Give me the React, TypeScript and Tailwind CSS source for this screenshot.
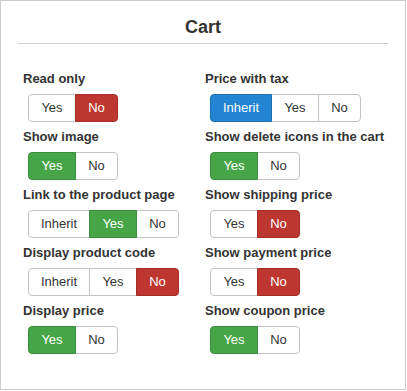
import React from 'react'

type Opt = 'Inherit' | 'Yes' | 'No'

type Setting = {
  label: string
  options: Opt[]
  active: Opt
}

const left: Setting[] = [
  { label: 'Read only', options: ['Yes', 'No'], active: 'No' },
  { label: 'Show image', options: ['Yes', 'No'], active: 'Yes' },
  { label: 'Link to the product page', options: ['Inherit', 'Yes', 'No'], active: 'Yes' },
  { label: 'Display product code', options: ['Inherit', 'Yes', 'No'], active: 'No' },
  { label: 'Display price', options: ['Yes', 'No'], active: 'Yes' },
]

const right: Setting[] = [
  { label: 'Price with tax', options: ['Inherit', 'Yes', 'No'], active: 'Inherit' },
  { label: 'Show delete icons in the cart', options: ['Yes', 'No'], active: 'Yes' },
  { label: 'Show shipping price', options: ['Yes', 'No'], active: 'No' },
  { label: 'Show payment price', options: ['Yes', 'No'], active: 'No' },
  { label: 'Show coupon price', options: ['Yes', 'No'], active: 'Yes' },
]

const widths: Record<Opt, string> = {
  Inherit: 'w-[62px]',
  Yes: 'w-[48px]',
  No: 'w-[43px]',
}

function activeClass(opt: Opt) {
  if (opt === 'Inherit') return 'bg-[#2384d3] border-[#1d6fb3] text-white'
  if (opt === 'Yes') return 'bg-[#46a546] border-[#3b8e3b] text-white'
  return 'bg-[#bd362f] border-[#a52e28] text-white'
}

function Toggle({ options, active }: { options: Opt[]; active: Opt }) {
  return (
    <div className="ml-[5px] mt-[6px] mb-[5px] flex h-[28px]">
      {options.map((opt, i) => (
        <button
          key={opt}
          className={[
            'flex h-full items-center justify-center border text-[13px]',
            widths[opt],
            i > 0 ? '-ml-px' : '',
            i === 0 ? 'rounded-l-[4px]' : '',
            i === options.length - 1 ? 'rounded-r-[4px]' : '',
            opt === active ? activeClass(opt) + ' relative z-10' : 'border-[#c4c4c4] bg-white text-[#333]',
          ].join(' ')}
        >
          {opt}
        </button>
      ))}
    </div>
  )
}

function Column({ items }: { items: Setting[] }) {
  return (
    <div className="flex flex-col">
      {items.map((s) => (
        <div key={s.label} className="flex flex-col items-start">
          <div className="mt-px h-[18px] text-[13px] font-bold leading-[18px] text-[#333]">{s.label}</div>
          <Toggle options={s.options} active={s.active} />
        </div>
      ))}
    </div>
  )
}

export default function App() {
  return (
    <div
      className="h-[390px] w-[406px] border border-[#cccccc] bg-white text-[#333]"
      style={{ fontFamily: '"Liberation Sans", Arial, sans-serif' }}
    >
      {/* title */}
      <div className="mx-[17px] border-b border-[#cccccc] pt-[15px] pb-[5px] text-center text-[18px] font-bold leading-[22px]">
        Cart
      </div>

      {/* settings */}
      <div className="mt-[25px] grid grid-cols-[182px_182px] pl-[22px]">
        <Column items={left} />
        <Column items={right} />
      </div>
    </div>
  )
}
